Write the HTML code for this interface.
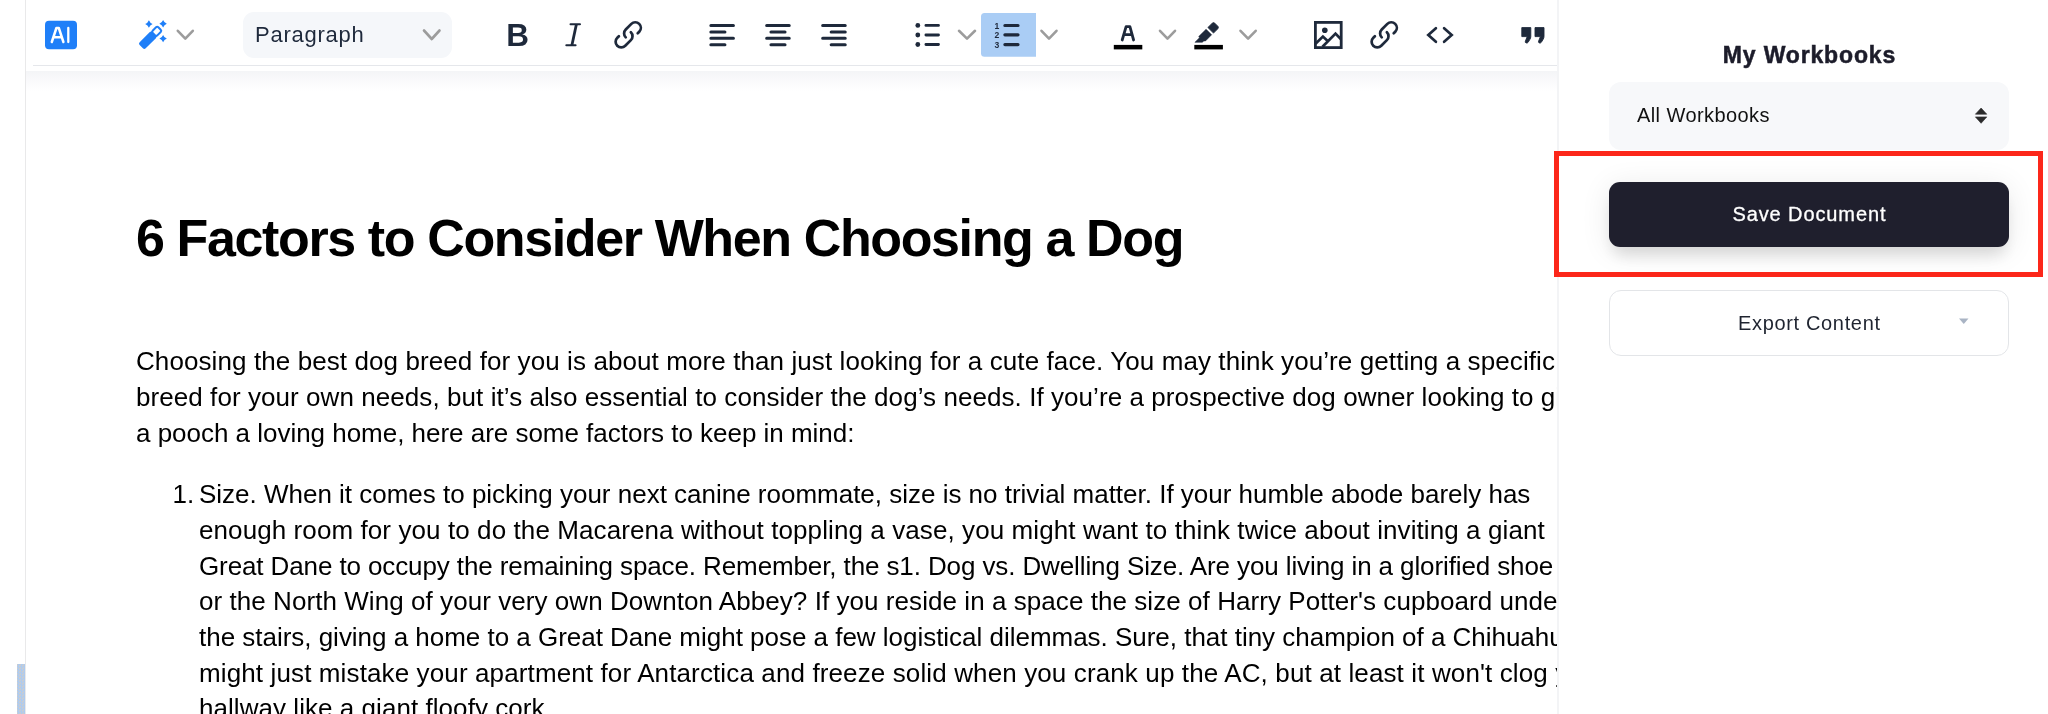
<!DOCTYPE html>
<html><head><meta charset="utf-8">
<style>
html,body{margin:0;padding:0;}
body{width:2048px;height:714px;overflow:hidden;position:relative;background:#fff;font-family:"Liberation Sans",sans-serif;}
.abs{position:absolute;}
#leftline{left:25px;top:0;width:1px;height:714px;background:#e9e9ea;}
#leftbar{left:17px;top:664px;width:8px;height:50px;background:repeating-conic-gradient(#aecbef 0 25%,#c8ccd2 0 50%) 0 0/3px 3px;}
#tbline{left:33px;top:65px;width:1524px;height:1px;background:#e5e7eb;}
#tbshadow{left:26px;top:71px;width:1531px;height:20px;background:linear-gradient(#f4f5f7,#fdfdfe 80%,#fff);}
#rstripe{left:1557px;top:0;width:2px;height:714px;background:#f3f4f6;}
svg{position:absolute;overflow:visible;}
.ic{fill:none;stroke:#1e293b;stroke-linecap:round;stroke-linejoin:round;}
.chev{fill:none;stroke:#9c9c9c;stroke-width:2.6;stroke-linecap:round;stroke-linejoin:round;}
#parasel{left:243px;top:12px;width:209px;height:46px;border-radius:11px;background:#f5f7fa;}
#parasel span{position:absolute;left:12px;top:10px;font-size:22px;letter-spacing:0.75px;color:#1e293b;line-height:26px;white-space:nowrap;}
#numbox{left:981px;top:13px;width:55px;height:44px;background:#aacdf5;border-radius:4px 0 0 4px;}
#editor{left:0;top:0;width:1557px;height:714px;overflow:hidden;}
#root{position:absolute;left:0;top:0;width:2048px;height:714px;will-change:transform;}
.ln{position:absolute;white-space:nowrap;font-size:26px;color:#000;line-height:30px;}
#h1{position:absolute;white-space:nowrap;font-size:52px;letter-spacing:-1.38px;font-weight:bold;color:#000;line-height:60px;}
#title{left:1609px;width:400px;text-align:center;top:40px;font-size:23px;font-weight:bold;color:#1c1c2a;letter-spacing:0.85px;-webkit-text-stroke:0.5px #1c1c2a;text-indent:0.85px;white-space:nowrap;line-height:30px;}
#wbsel{left:1609px;top:82px;width:400px;height:68px;border-radius:12px;background:#f7f8fa;}
#wbsel span{position:absolute;left:28px;top:21px;font-size:20px;letter-spacing:0.42px;color:#111;white-space:nowrap;line-height:24px;}
#redbox{left:1554.2px;top:151.4px;width:478.5px;height:115.5px;border:5.2px solid #fc271a;}
#savebtn{left:1609px;top:182px;width:400px;height:65px;border-radius:11px;background:#1f1f2d;box-shadow:0 12px 16px -4px rgba(0,0,0,0.12),0 4px 30px rgba(0,0,0,0.09);}
#savebtn span{position:absolute;left:0;width:400px;text-align:center;top:20px;font-size:20px;color:#fff;letter-spacing:0.9px;-webkit-text-stroke:0.3px #fff;text-indent:0.9px;white-space:nowrap;line-height:24px;}
#export{left:1609px;top:290px;width:398px;height:64px;border-radius:12px;border:1px solid #e3e5e8;background:#fff;}
#export span{position:absolute;left:0;width:398px;text-align:center;top:20px;font-size:20px;color:#1f2430;letter-spacing:0.66px;text-indent:0.66px;white-space:nowrap;line-height:24px;}
</style></head>
<body>
<div id="root">
<div id="leftline" class="abs"></div>
<div id="leftbar" class="abs"></div>
<div id="tbline" class="abs"></div>
<div id="tbshadow" class="abs"></div>
<div id="rstripe" class="abs"></div>

<!-- TOOLBAR -->
<div id="toolbar">
<div id="parasel" class="abs"><span>Paragraph</span></div>
<svg style="left:0;top:0" width="1557" height="70" viewBox="0 0 1557 70">
<rect x="45" y="20.8" width="32" height="28.4" rx="4" fill="#1f7ff8"/>
<path d="M51.8,42 L56.4,28 H58.8 L63.4,42 M54,37.2 H61.2" fill="none" stroke="#fff" stroke-width="2.5" stroke-linecap="round" stroke-linejoin="round"/>
<path d="M68.3,28 V42" fill="none" stroke="#fff" stroke-width="2.3" stroke-linecap="round"/>
<g fill="#1f7ff8"><path d="M148.9,20.3 Q149.936,22.964 152.6,24 Q149.936,25.036 148.9,27.7 Q147.864,25.036 145.20000000000002,24 Q147.864,22.964 148.9,20.3 Z"/><path d="M163.1,20.1 Q164.136,22.764 166.79999999999998,23.8 Q164.136,24.836000000000002 163.1,27.5 Q162.064,24.836000000000002 159.4,23.8 Q162.064,22.764 163.1,20.1 Z"/><path d="M163.1,34.9 Q164.136,37.564 166.79999999999998,38.6 Q164.136,39.636 163.1,42.300000000000004 Q162.064,39.636 159.4,38.6 Q162.064,37.564 163.1,34.9 Z"/></g>
<g transform="translate(150.6,37.4) rotate(-45)"><rect x="-13.2" y="-4.3" width="18.4" height="8.6" rx="2" fill="#1f7ff8"/><rect x="4.6" y="-3.3" width="8" height="6.6" rx="1.6" fill="none" stroke="#1f7ff8" stroke-width="2"/></g>
<polyline class="chev" points="177.8,30.8 185.3,38.6 192.8,30.8"/>
<polyline class="chev" points="424,30.5 431.75,39 439.5,30.5"/>
<text x="506.2" y="46" font-family="Liberation Sans" font-weight="bold" font-size="31.5" fill="#1e293b">B</text>
<path d="M570.5,24.2 H580 M566.3,45.3 H575.6" stroke="#1e293b" stroke-width="2" fill="none" stroke-linecap="round"/>
<path d="M576.4,24.2 L571.9,45.3" stroke="#1e293b" stroke-width="2.8" fill="none"/>
<g transform="translate(611.50,18.0) scale(1.4)"><g transform="matrix(0,-1,-1,0,24,24)"><path d="M13.828 10.172a4 4 0 00-5.656 0l-4 4a4 4 0 105.656 5.656l1.102-1.101m-.758-4.899a4 4 0 005.656 0l4-4a4 4 0 00-5.656-5.656l-1.1 1.1" fill="none" stroke="#1e293b" stroke-width="1.95" stroke-linecap="round" stroke-linejoin="round"/></g></g>
<path d="M710.9,25.5 H733.4 M710.9,32 H724.9 M710.9,38.3 H733.4 M710.9,44.7 H724.9 " stroke="#1e293b" stroke-width="3.1" stroke-linecap="round" fill="none"/>
<path d="M766.7,25.5 H789.2 M771.0,32 H785.0 M766.7,38.3 H789.2 M771.0,44.7 H785.0 " stroke="#1e293b" stroke-width="3.1" stroke-linecap="round" fill="none"/>
<path d="M822.7,25.5 H845.2 M831.2,32 H845.2 M822.7,38.3 H845.2 M831.2,44.7 H845.2 " stroke="#1e293b" stroke-width="3.1" stroke-linecap="round" fill="none"/>
<g fill="#1e293b"><circle cx="917.8" cy="25.4" r="2.4"/><circle cx="917.8" cy="35" r="2.4"/><circle cx="917.8" cy="44.5" r="2.4"/></g>
<path d="M925.9,25.4 H938.5 M925.9,35 H938.5 M925.9,44.5 H938.5" stroke="#1e293b" stroke-width="2.8" stroke-linecap="round" fill="none"/>
<polyline class="chev" points="959,30.8 967.0,38.6 975,30.8"/>
<path d="M984.5,13 H1036 V56.8 H984.5 Q981,56.8 981,53.3 V16.5 Q981,13 984.5,13 Z" fill="#aacdf5"/>
<path d="M1004.9,25.5 H1018 M1004.9,34.8 H1018 M1004.9,44.6 H1018" stroke="#1e293b" stroke-width="3.2" stroke-linecap="round" fill="none"/>
<g font-family="Liberation Sans" font-weight="bold" font-size="8.6" fill="#1e293b"><text x="994.6" y="28.6">1</text><text x="994.6" y="38.3">2</text><text x="994.6" y="47.8">3</text></g>
<polyline class="chev" points="1041.5,30.8 1049.0,38.6 1056.5,30.8"/>
<path d="M1122.2,40 L1126.1,26.7 H1129.9 L1133.6,40 M1124.3,34.6 H1131.7" stroke="#1e293b" stroke-width="2.8" stroke-linecap="round" stroke-linejoin="round" fill="none"/>
<rect x="1113.8" y="44.9" width="28.5" height="4.5" fill="#000"/>
<polyline class="chev" points="1160,30.8 1167.5,38.6 1175,30.8"/>
<path d="M1207.9,27.5 L1212.2,23.2 Q1213.5,21.9 1214.8,23.2 L1217.8,26.2 Q1219.1,27.5 1217.8,28.8 L1213.5,33.1 Z" fill="#1e293b" stroke="#1e293b" stroke-width="0.8" stroke-linejoin="round"/>
<path d="M1206.1,29.3 L1211.6,34.8 L1205.5,40.9 L1203.6,40.9 L1202.5,42.2 L1195,42.3 L1199.5,37.7 L1198.7,36.6 Z" fill="#1e293b" stroke="#1e293b" stroke-width="0.6" stroke-linejoin="round"/>
<rect x="1194.3" y="44.9" width="28.6" height="4.5" fill="#000"/>
<polyline class="chev" points="1240.5,30.8 1248.1,38.6 1255.7,30.8"/>
<rect x="1315.4" y="22.4" width="25.8" height="25.2" fill="none" stroke="#1e293b" stroke-width="2.8"/>
<circle cx="1324.8" cy="30.3" r="2.8" fill="#1e293b"/>
<path d="M1315.5,43.8 L1322.9,36.6 L1328.2,41.6 M1322.5,46.8 L1335.5,33.6 L1341,39.3" stroke="#1e293b" stroke-width="2.7" fill="none"/>
<g transform="translate(1367.50,18.0) scale(1.4)"><g transform="matrix(0,-1,-1,0,24,24)"><path d="M13.828 10.172a4 4 0 00-5.656 0l-4 4a4 4 0 105.656 5.656l1.102-1.101m-.758-4.899a4 4 0 005.656 0l4-4a4 4 0 00-5.656-5.656l-1.1 1.1" fill="none" stroke="#1e293b" stroke-width="1.95" stroke-linecap="round" stroke-linejoin="round"/></g></g>
<path d="M1435.9,28.2 L1428.3,35 L1435.9,41.8 M1444.1,28.2 L1451.7,35 L1444.1,41.8" stroke="#1e293b" stroke-width="2.7" stroke-linecap="round" stroke-linejoin="miter" fill="none"/>
<path d="M1521.8,27.6 H1530.8 V36.5 Q1530.8,38 1529.8,39.6 L1528.1,42.3 Q1527.3,43.4 1526.0,42.9 Q1524.8,42.3 1525.3999999999999,41.2 L1527.2,36.6 H1521.8 Z" fill="#1e293b" stroke="#1e293b" stroke-width="0.9" stroke-linejoin="round"/>
<path d="M1535,27.6 H1544 V36.5 Q1544,38 1543,39.6 L1541.3,42.3 Q1540.5,43.4 1539.2,42.9 Q1538,42.3 1538.6,41.2 L1540.4,36.6 H1535 Z" fill="#1e293b" stroke="#1e293b" stroke-width="0.9" stroke-linejoin="round"/>
</svg>
</div>

<!-- EDITOR -->
<div id="editor" class="abs">
<div id="h1" style="left:136px;top:208px">6 Factors to Consider When Choosing a Dog</div>
<div class="ln" id="p1" style="left:136px;top:346.3px;letter-spacing:0.091px">Choosing the best dog breed for you is about more than just looking for a cute face. You may think you’re getting a specific</div>
<div class="ln" id="p2" style="left:136px;top:382.0px;letter-spacing:0.066px">breed for your own needs, but it’s also essential to consider the dog’s needs. If you’re a prospective dog owner looking to give</div>
<div class="ln" id="p3" style="left:136px;top:417.7px;letter-spacing:-0.022px">a pooch a loving home, here are some factors to keep in mind:</div>
<div class="ln" id="l1" style="left:199px;top:479.2px;letter-spacing:-0.009px">Size. When it comes to picking your next canine roommate, size is no trivial matter. If your humble abode barely has</div>
<div class="ln" id="l2" style="left:199px;top:514.9px;letter-spacing:0.089px">enough room for you to do the Macarena without toppling a vase, you might want to think twice about inviting a giant</div>
<div class="ln" id="l3" style="left:199px;top:550.6px;letter-spacing:-0.111px">Great Dane to occupy the remaining space. Remember, the s1. Dog vs. Dwelling Size. Are you living in a glorified shoe</div>
<div class="ln" id="l4" style="left:199px;top:586.3px;letter-spacing:0.058px">or the North Wing of your very own Downton Abbey? If you reside in a space the size of Harry Potter's cupboard under</div>
<div class="ln" id="l5" style="left:199px;top:622.0px;letter-spacing:-0.021px">the stairs, giving a home to a Great Dane might pose a few logistical dilemmas. Sure, that tiny champion of a Chihuahua</div>
<div class="ln" id="l6" style="left:199px;top:657.7px;letter-spacing:0.122px">might just mistake your apartment for Antarctica and freeze solid when you crank up the AC, but at least it won't clog your</div>
<div class="ln" id="l7" style="left:199px;top:693.4px;letter-spacing:0.050px">hallway like a giant floofy cork.</div>
<div class="ln" id="marker" style="left:172.5px;top:479.2px">1.</div>
</div>

<!-- RIGHT PANEL -->
<div id="title" class="abs">My Workbooks</div>
<div id="wbsel" class="abs"><span>All Workbooks</span></div>
<div id="redbox" class="abs"></div>
<div id="savebtn" class="abs"><span>Save Document</span></div>
<div id="export" class="abs"><span>Export Content</span></div>
<svg style="left:1970px;top:104px" width="24" height="24" viewBox="0 0 24 24"><path d="M5.4,10.2 L11.1,4 L16.8,10.2 Z M5.4,12.9 L11.1,19.3 L16.8,12.9 Z" fill="#2b2b2b" stroke="#2b2b2b" stroke-width="0.6" stroke-linejoin="round"/></svg>
<svg style="left:1955px;top:314px" width="16" height="14" viewBox="0 0 16 14"><path d="M4,4.5 H13.5 L8.75,10 Z" fill="#a9b4c4"/></svg>
</div>
</body></html>
